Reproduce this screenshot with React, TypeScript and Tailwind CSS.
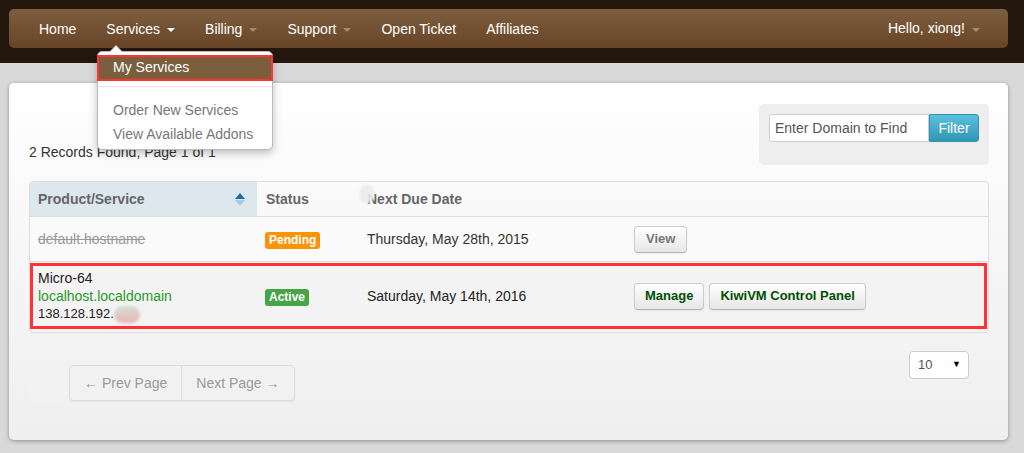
import { useState } from "react";

const navLinks = [
  { label: "Home" },
  { label: "Services", caret: "white" },
  { label: "Billing", caret: "gray" },
  { label: "Support", caret: "gray" },
  { label: "Open Ticket" },
  { label: "Affiliates" },
];

function Caret({ light }: { light?: boolean }) {
  return (
    <span
      className={
        "inline-block w-0 h-0 ml-[7px] mt-[2px] border-x-[4px] border-x-transparent border-t-[4px] " +
        (light ? "border-t-white" : "border-t-[#a08a74]")
      }
    />
  );
}

function Button({ children, green }: { children: string; green?: boolean }) {
  return (
    <button
      className={
        "h-[27px] px-[10px] rounded-[4px] border border-[#ccc] border-b-[#b3b3b3] bg-gradient-to-b from-white to-[#e6e6e6] shadow-[inset_0_1px_0_rgba(255,255,255,0.2),0_1px_2px_rgba(0,0,0,0.05)] font-bold text-[13px] " +
        (green ? "text-[#005000]" : "text-[#777] px-[11px]")
      }
    >
      {children}
    </button>
  );
}

function App() {
  const [domain, setDomain] = useState("");

  return (
    <div className="relative w-full h-[453px] overflow-hidden bg-[#d9d9d9] font-['Liberation_Sans',Arial,sans-serif] text-[14px] text-[#333]">
      {/* top bar */}
      <div className="h-[63px] bg-[#24170d] pt-[9px] px-[9px] pr-[16px]">
        <div className="h-[39px] rounded-[5px] bg-gradient-to-b from-[#7c5e3e] to-[#694426] flex items-center justify-between pl-[15px] pr-[13px] text-white">
          <div className="flex items-center">
            {navLinks.map((l) => (
              <a key={l.label} className="flex items-center px-[15px] leading-[20px]">
                {l.label}
                {l.caret && <Caret light={l.caret === "white"} />}
              </a>
            ))}
          </div>
          <a className="flex items-center px-[15px]">
            Hello, xiong!
            <Caret />
          </a>
        </div>
      </div>

      {/* main card */}
      <div className="mt-[20px] ml-[9px] mr-[16px] h-[357px] rounded-[5px] bg-gradient-to-b from-white via-[#f6f6f6] to-[#efefef] shadow-[0_1px_4px_rgba(0,0,0,0.35)] pt-[21px] pl-[20px] pr-[19px]">
        <div className="flex justify-between">
          <div className="self-end mb-[4px] leading-[18px]">2 Records Found, Page 1 of 1</div>
          <div className="w-[230px] h-[61px] rounded-[5px] bg-[#eee] p-[10px]">
            <div className="flex">
              <input
                value={domain}
                onChange={(e) => setDomain(e.target.value)}
                placeholder="Enter Domain to Find"
                className="w-[160px] h-[28px] px-[5px] bg-white border border-[#ccc] rounded-l-[3px] text-[14px] text-[#555] placeholder:text-[#555] outline-none"
              />
              <button className="w-[50px] h-[28px] rounded-r-[3px] bg-gradient-to-b from-[#5bc0de] to-[#2f96b4] border border-[#2f96b4] text-white text-[14px]">
                Filter
              </button>
            </div>
          </div>
        </div>

        {/* table */}
        <div className="mt-[16px] border border-[#ddd] rounded-[4px] overflow-hidden">
          <div className="relative grid grid-cols-[227px_102px_267px_1fr] h-[35px] border-b border-[#ddd] font-bold text-[#666] items-stretch">
            <div className="bg-[#dce7ee] flex items-center justify-between pl-[8px] pr-[12px]">
              <span>Product/Service</span>
              <span className="flex flex-col items-center gap-[1px]">
                <span className="w-0 h-0 border-x-[5px] border-x-transparent border-b-[6px] border-b-[#2566a8]" />
                <span className="w-0 h-0 border-x-[5px] border-x-transparent border-t-[6px] border-t-[#b1c6d8]" />
              </span>
            </div>
            <div className="flex items-center pl-[9px]">Status</div>
            <div className="relative flex items-center pl-[8px]">
              <span>Next Due Date</span>
              <span className="absolute left-[1px] top-[3px] w-[14px] h-[18px] rounded-[6px] bg-[#ececec] opacity-90 blur-[1px]" />
            </div>
            <div />
          </div>

          <div className="grid grid-cols-[227px_102px_267px_1fr] h-[45px] items-center border-b border-[#ddd] bg-[#fafafa]">
            <div className="pl-[8px] text-[#999] line-through">default.hostname</div>
            <div className="pl-[8px]">
              <span className="inline-block px-[4px] h-[17px] leading-[17px] rounded-[3px] bg-[#f89406] text-white font-bold text-[12px]">
                Pending
              </span>
            </div>
            <div className="pl-[8px]">Thursday, May 28th, 2015</div>
            <div className="pl-[8px]">
              <Button>View</Button>
            </div>
          </div>

          <div className="h-[70px] pt-[1px] pl-[0px] pr-[1px] pb-[3px] bg-[#f3f3f3]">
            <div className="h-[66px] border-[3px] border-[#f33] grid grid-cols-[224px_102px_267px_1fr] items-center text-[#222]">
              <div className="pl-[5px] leading-[18px]">
                <div>Micro-64</div>
                <div className="text-[#2a9a2a]">localhost.localdomain</div>
                <div className="flex items-center text-[13px]">
                  138.128.192.
                  <span className="inline-block w-[26px] h-[17px] rounded-full bg-gradient-to-b from-[#d3ddd6] to-[#e8b5b5] blur-[1.5px]" />
                </div>
              </div>
              <div className="pl-[8px]">
                <span className="inline-block px-[4px] h-[17px] leading-[17px] rounded-[3px] bg-[#46a546] text-white font-bold text-[12px]">
                  Active
                </span>
              </div>
              <div className="pl-[8px]">Saturday, May 14th, 2016</div>
              <div className="pl-[8px] flex gap-[5px]">
                <Button green>Manage</Button>
                <Button green>KiwiVM Control Panel</Button>
              </div>
            </div>
          </div>
        </div>

        {/* pager + per page */}
        <div className="flex justify-between">
          <div className="flex mt-[32px]">
            <div className="w-[40px] h-[36px] bg-[#f2f2f2] rounded-l-[3px]" />
            <div className="flex h-[36px] border border-[#ddd] rounded-[4px] text-[#999] shadow-[0_1px_2px_rgba(0,0,0,0.05)]">
              <span className="flex items-center px-[14px] border-r border-[#ddd]">← Prev Page</span>
              <span className="flex items-center px-[14px]">Next Page →</span>
            </div>
          </div>
          <div className="mt-[18px] mr-[20px] w-[60px] h-[28px] bg-white border border-[#ccc] rounded-[4px] flex items-center justify-between pl-[8px] pr-[7px] text-[#555] text-[13px]">
            <span>10</span>
            <span className="text-[9px] text-black">▼</span>
          </div>
        </div>
      </div>

      {/* services dropdown */}
      <div className="absolute left-[97px] top-[51px] w-[176px] h-[99px] bg-white border border-[#bbb] rounded-[5px] shadow-[0_3px_8px_rgba(0,0,0,0.25)] pt-[3px]">
        <span className="absolute left-[11px] -top-[7px] w-0 h-0 border-x-[7px] border-x-transparent border-b-[7px] border-b-[#bbb]" />
        <span className="absolute left-[12px] -top-[6px] w-0 h-0 border-x-[6px] border-x-transparent border-b-[6px] border-b-white" />
        <div className="-mx-[1px] h-[26px] border-[2px] border-[#f33] bg-[#7a5e3d] text-white flex items-center pl-[14px] pb-[2px]">
          My Services
        </div>
        <div className="mt-[5px] h-px bg-[#e5e5e5]" />
        <div className="mt-[11px] pl-[15px] text-[#777] leading-[24px]">Order New Services</div>
        <div className="pl-[15px] text-[#777] leading-[24px]">View Available Addons</div>
      </div>
    </div>
  );
}

export default App;
